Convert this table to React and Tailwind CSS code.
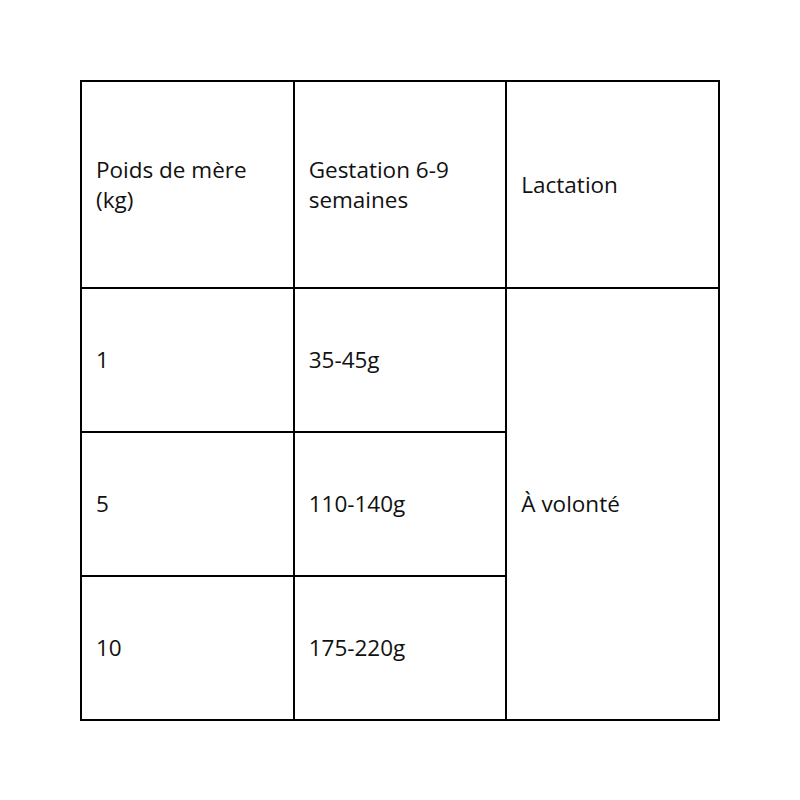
import React from 'react'

const rows = [
    { poids: '1', gestation: '35-45g' },
    { poids: '5', gestation: '110-140g' },
    { poids: '10', gestation: '175-220g' },
]

export default function App() {
    const cell = 'border-2 border-black px-[14px] align-middle'

    return (
        <div className="w-full h-[800px] bg-white pt-[80px] font-['Open_Sans',sans-serif] text-[22.5px] leading-[30px] text-[#111]">
            <table className="mx-auto w-[640px] border-collapse table-fixed">
                <tbody>
                    <tr className="h-[207px]">
                        <td className={cell}>Poids de mère (kg)</td>
                        <td className={cell}>Gestation 6-9 semaines</td>
                        <td className={cell}>Lactation</td>
                    </tr>
                    {rows.map((r, i) => (
                        <tr key={r.poids} className="h-[144px]">
                            <td className={cell}>{r.poids}</td>
                            <td className={cell}>{r.gestation}</td>
                            {i === 0 && (
                                <td className={cell} rowSpan={3}>
                                    À volonté
                                </td>
                            )}
                        </tr>
                    ))}
                </tbody>
            </table>
        </div>
    )
}
